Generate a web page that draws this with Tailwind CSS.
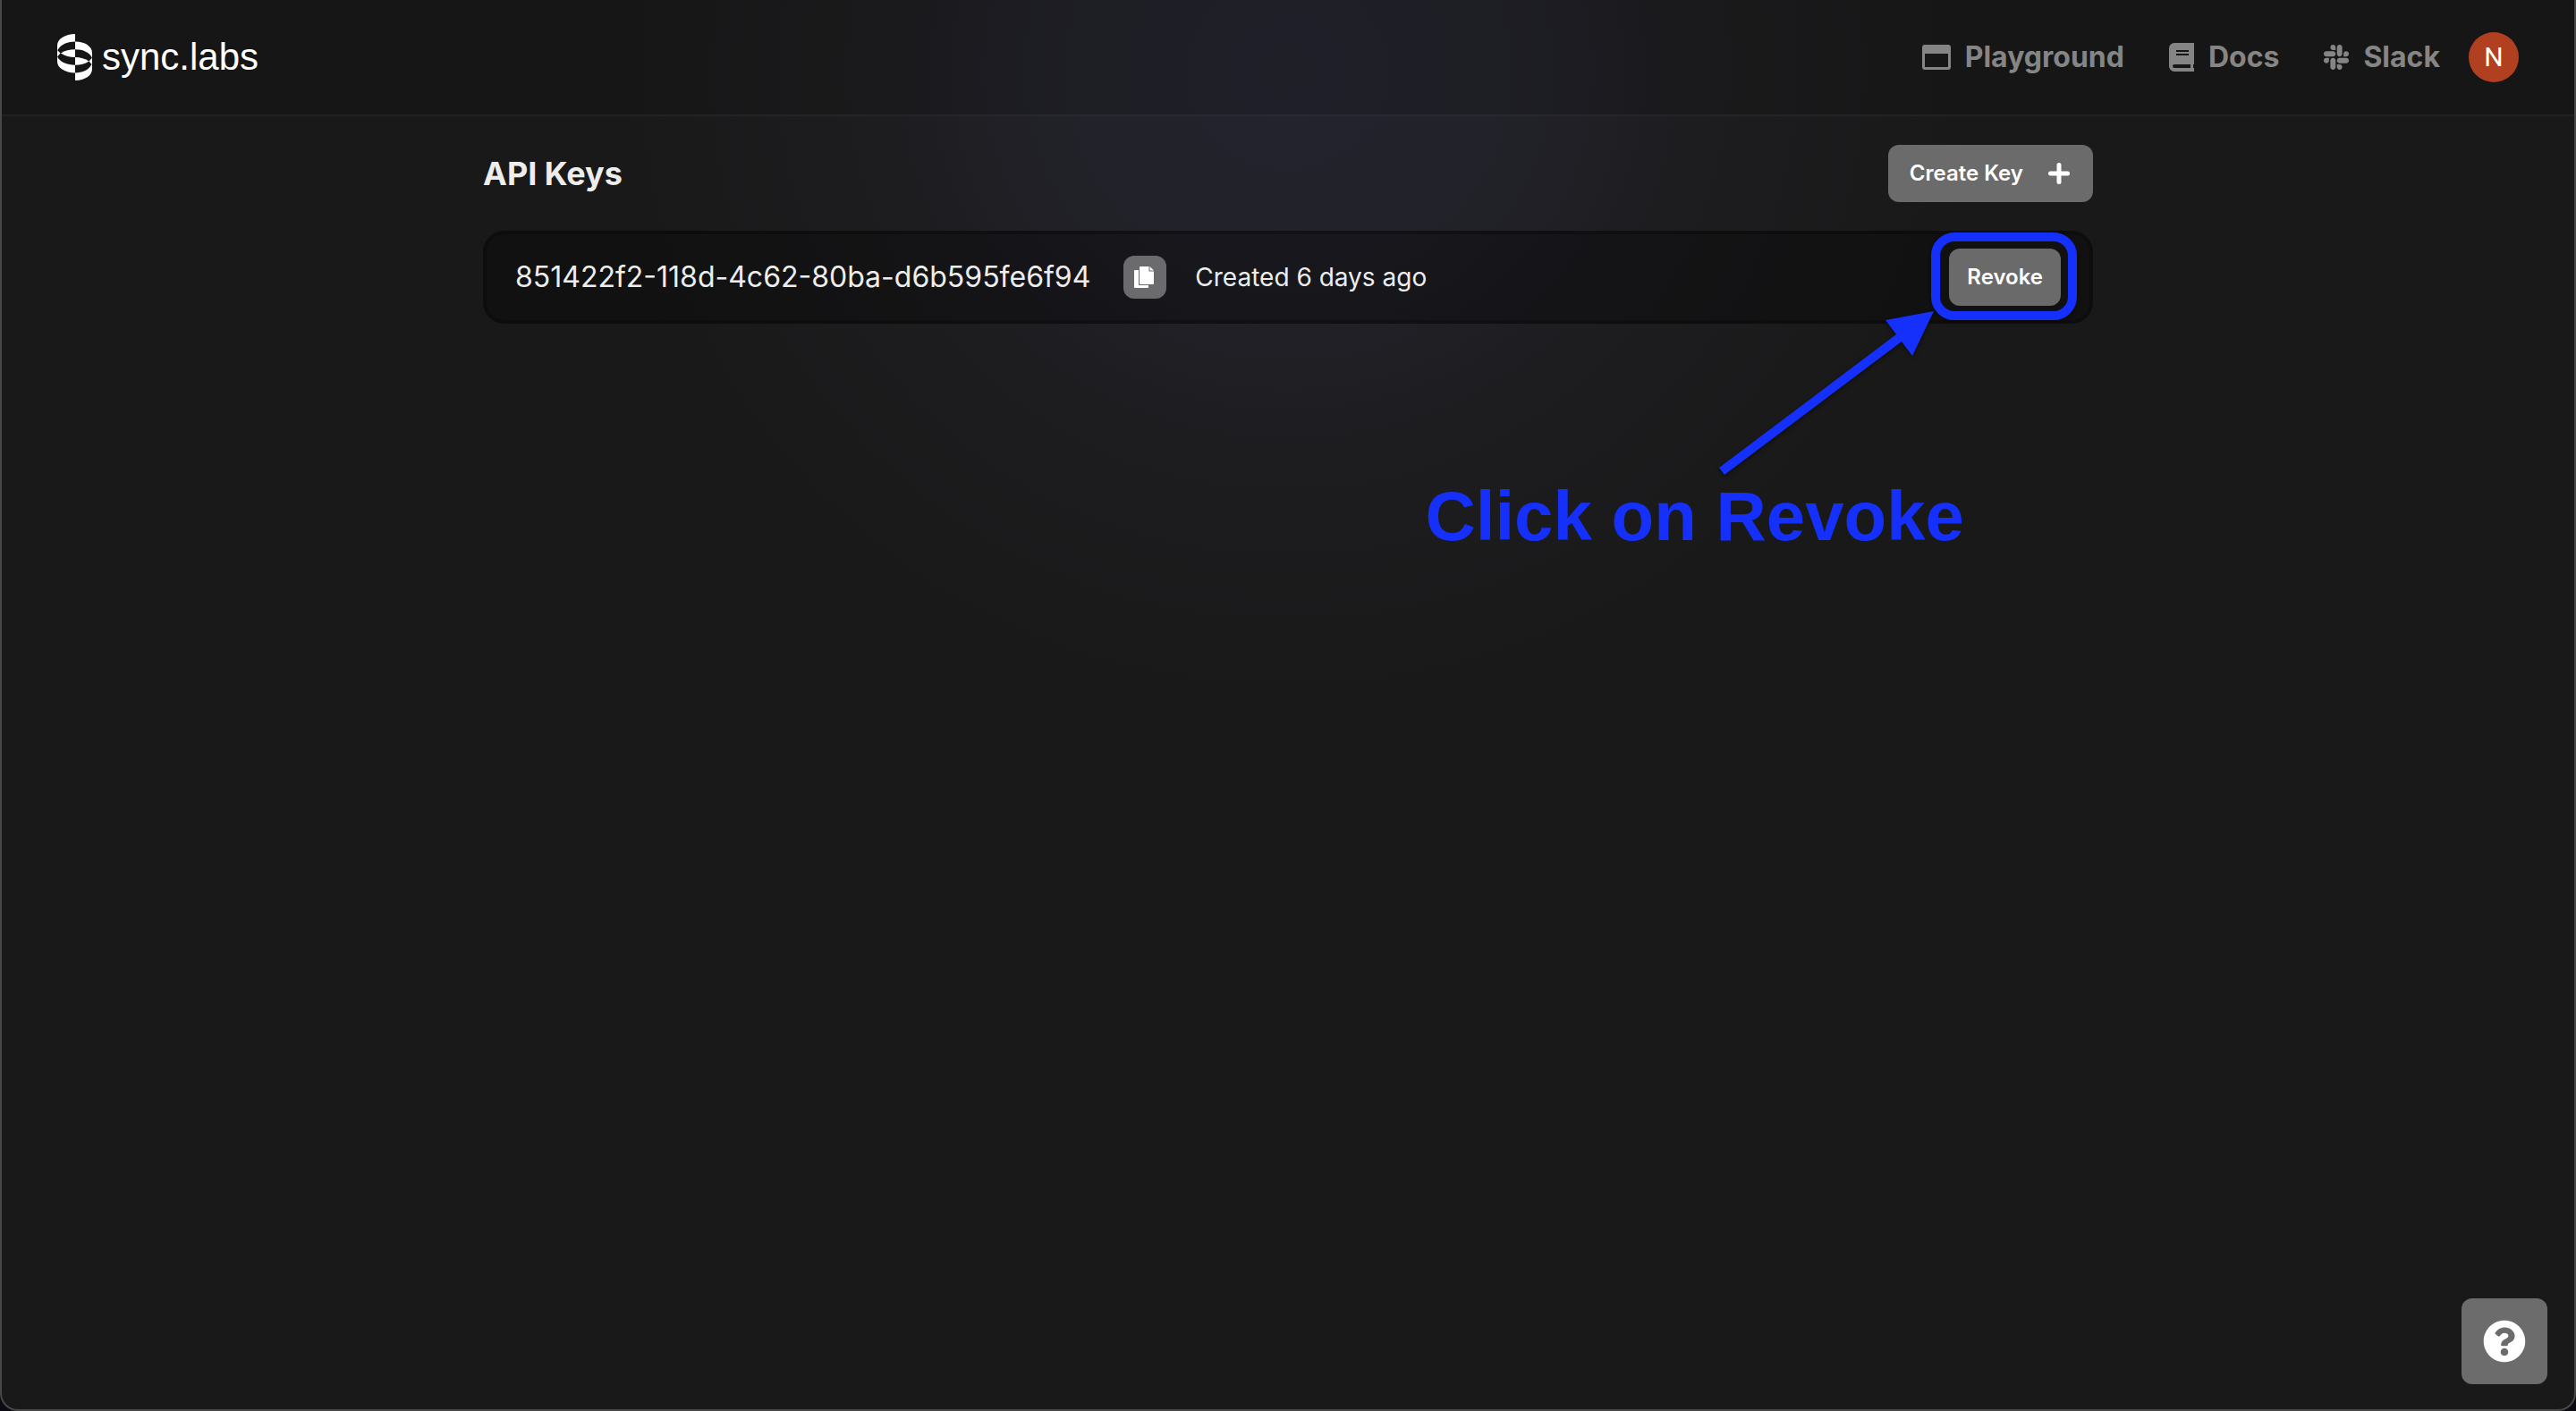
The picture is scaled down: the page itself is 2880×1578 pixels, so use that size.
<!DOCTYPE html>
<html lang="en">
<head>
<meta charset="utf-8">
<meta name="viewport" content="width=device-width, initial-scale=1">
<title>sync.labs – API Keys</title>
<script src="https://cdn.jsdelivr.net/npm/@tailwindcss/browser@4"></script>
</head>
<body class="bg-[#0c0a12] font-['Inter',sans-serif] text-[#ededed]">
<div class="relative flex min-h-screen flex-col overflow-hidden rounded-b-[20px] border-x-2 border-b-2 border-[#484848] bg-[#191919] bg-[radial-gradient(ellipse_760px_720px_at_50%_80px,#23232e_0%,#22222a_30%,#1d1d20_60%,#191919_100%)]">
  <header class="flex h-[130px] items-center justify-between border-b-2 border-white/5 bg-black/10 px-[62px]">
    <a href="#" class="flex items-center gap-2.5 text-white">
      <svg class="h-[52px] w-[40px]" viewBox="0 0 40 52" fill="currentColor" aria-hidden="true">
        <path d="M20 0v8.600C12 8.600 5 11.500 1.500 16.500L0 18.500V13C0 5.500 9 0 20 0Z"/>
        <path d="M20 8.600C31 8.600 39 14 39 21v5.700C36 20.500 29 17.300 20 17.300Z"/>
        <path d="M20 17.300V26C14 26 8.500 24.500 4 21.500 8.500 18.500 14 17.300 20 17.300Z"/>
        <path d="M0 18 3.500 21.500 0 25.500Z"/>
        <path d="M20 26c6 0 11 1.500 15.500 4.500-4.500 3-9.500 4.200-15.500 4.200Z"/>
        <path d="M39 26.500v8l-3.500-4Z"/>
        <path d="M0 25.300C3 31.500 11 34.700 20 34.700v8.700C9 43.400 0 38 0 31Z"/>
        <path d="M39 33.500V39c0 7.500-8 13-19 13v-8.600c8 0 14.500-2.900 17.500-7.900Z"/>
      </svg>
      <span class="font-['Liberation_Sans',sans-serif] text-[42px] leading-[52px]">sync.labs</span>
    </a>
    <nav class="flex items-center gap-[50px] text-[32px] leading-10 font-bold text-[#858585]">
      <a href="#" class="flex items-center gap-4">
        <svg class="h-7 w-8" viewBox="0 0 32 28" fill="currentColor" aria-hidden="true"><path fill-rule="evenodd" d="M3 0h26a3 3 0 0 1 3 3v22a3 3 0 0 1-3 3H3a3 3 0 0 1-3-3V3a3 3 0 0 1 3-3Zm0 10v14.500c0 .3.200.5.500.5h25c.3 0 .5-.2.500-.5V10Z"/></svg>
        Playground
      </a>
      <a href="#" class="flex items-center gap-4">
        <svg class="h-8 w-7" viewBox="0 0 28 32" fill="currentColor" aria-hidden="true"><path fill-rule="evenodd" d="M6 0h22v24h-1v4h1v4H6a6 6 0 0 1-6-6V6a6 6 0 0 1 6-6Zm2 8v2h14V8Zm0 4v2h14v-2ZM6 24a2 2 0 0 0 0 4h18v-4Z"/></svg>
        Docs
      </a>
      <div class="flex items-center gap-8">
        <a href="#" class="flex items-center gap-4">
          <svg class="h-8 w-7" viewBox="0 0 448 512" fill="currentColor" aria-hidden="true"><path d="M94.120 315.100c0 25.900-21.160 47.060-47.060 47.060S0 341 0 315.100c0-25.900 21.160-47.060 47.060-47.060h47.060v47.060zm23.720 0c0-25.900 21.160-47.060 47.060-47.060s47.060 21.160 47.060 47.060v117.840c0 25.900-21.160 47.060-47.060 47.060s-47.060-21.160-47.060-47.060V315.100zm47.060-188.980c-25.900 0-47.060-21.160-47.060-47.060S139 32 164.900 32s47.060 21.160 47.060 47.060v47.060H164.900zm0 23.720c25.900 0 47.060 21.160 47.060 47.060s-21.160 47.060-47.060 47.060H47.060C21.160 243.960 0 222.800 0 196.900s21.160-47.060 47.060-47.060H164.900zm188.980 47.060c0-25.900 21.160-47.060 47.060-47.060 25.900 0 47.060 21.160 47.060 47.060s-21.160 47.060-47.060 47.060h-47.060V196.900zm-23.720 0c0 25.900-21.160 47.060-47.060 47.060-25.900 0-47.060-21.160-47.060-47.060V79.060c0-25.900 21.160-47.060 47.060-47.060 25.900 0 47.060 21.160 47.060 47.060V196.900zM283.100 385.880c25.900 0 47.060 21.160 47.060 47.060 0 25.900-21.160 47.060-47.060 47.060-25.900 0-47.060-21.160-47.060-47.060v-47.060h47.060zm0-23.720c-25.900 0-47.060-21.160-47.060-47.060 0-25.900 21.160-47.060 47.060-47.060h117.840c25.900 0 47.060 21.160 47.060 47.060 0 25.900-21.160 47.060-47.060 47.060H283.100z"/></svg>
          Slack
        </a>
        <button type="button" aria-label="Account" class="flex size-14 items-center justify-center rounded-full bg-[#b04020] font-['Roboto',sans-serif] text-[30px] font-normal text-white">N</button>
      </div>
    </nav>
  </header>

  <main class="mx-auto flex w-full max-w-[1800px] flex-1 flex-col gap-8 pt-8">
    <div class="flex items-center justify-between">
      <h1 class="text-[36px] leading-10 font-bold">API Keys</h1>
      <button type="button" class="flex h-16 items-center gap-[26px] rounded-xl bg-[#6b6b6b] px-6 text-2xl font-semibold text-white">
        Create Key
        <svg class="size-7" viewBox="0 0 28 28" fill="none" stroke="currentColor" stroke-width="5" stroke-linecap="round" aria-hidden="true"><path d="M14 4.500v19M4.500 14h19"/></svg>
      </button>
    </div>

    <section class="flex h-[104px] items-center justify-between rounded-3xl border-4 border-black/25 bg-black/30 px-8">
      <div class="flex items-center gap-8">
        <span class="pr-[5px] text-[32px] leading-10">851422f2-118d-4c62-80ba-d6b595fe6f94</span>
        <button type="button" aria-label="Copy key" class="flex size-12 items-center justify-center rounded-xl bg-[#6b6b6d] text-white">
          <svg class="size-6" viewBox="0 0 24 24" fill="currentColor" aria-hidden="true"><path d="M7 0h9.500v5.500H22V19a1 1 0 0 1-1 1H7a1 1 0 0 1-1-1V1a1 1 0 0 1 1-1Z"/><path d="M17.500 0 22 4.500h-4.500Z"/><path d="M1 4h4v17h11v2a1 1 0 0 1-1 1H1a1 1 0 0 1-1-1V5a1 1 0 0 1 1-1Z"/></svg>
        </button>
        <span class="text-[28px] leading-10">Created 6 days ago</span>
      </div>
      <div class="relative">
        <button type="button" class="flex h-16 items-center rounded-xl bg-[#6a6a6a] px-5 text-2xl font-semibold text-white">Revoke</button>
        <div class="pointer-events-none absolute -top-[18px] -right-[18px] -bottom-4 -left-5 rounded-[26px] border-10 border-[#1430fa] shadow-[0_2px_4px_rgba(0,0,0,0.5)]"></div>
        <svg class="pointer-events-none absolute top-[68px] right-[140px] h-[188px] w-[244px] text-[#1430fa] drop-shadow-[0_2px_2px_rgba(0,0,0,0.5)]" viewBox="0 0 244 188" fill="currentColor" aria-hidden="true"><path d="M242 2 188 12 200 28 2 177 8 185 206 36 218 52Z"/></svg>
        <p class="pointer-events-none absolute top-[255px] right-[108px] font-['Liberation_Sans',sans-serif] text-[78px] leading-[88px] font-bold whitespace-nowrap text-[#1430fa]">Click on Revoke</p>
      </div>
    </section>
  </main>

  <button type="button" aria-label="Help" class="fixed right-8 bottom-[30px] flex size-24 items-center justify-center rounded-xl bg-[#6c6c6c] text-white">
    <svg class="size-12" viewBox="0 0 512 512" fill="currentColor" aria-hidden="true"><path d="M504 256c0 136.997-111.043 248-248 248S8 392.997 8 256C8 119.083 119.043 8 256 8s248 111.083 248 248zM262.655 90c-54.497 0-89.255 22.957-116.549 63.758-3.536 5.286-2.353 12.415 2.715 16.258l34.699 26.310c5.205 3.947 12.621 3.008 16.665-2.122 17.864-22.658 30.113-35.797 57.303-35.797 20.429 0 45.698 13.148 45.698 32.958 0 14.976-12.363 22.667-32.534 33.976C247.128 238.528 216 254.941 216 296v4c0 6.627 5.373 12 12 12h56c6.627 0 12-5.373 12-12v-1.333c0-28.462 83.186-29.647 83.186-106.667 0-58.002-60.165-102-116.531-102zM256 338c-25.365 0-46 20.635-46 46 0 25.364 20.635 46 46 46s46-20.636 46-46c0-25.364-20.635-46-46-46z"/></svg>
  </button>
</div>
</body>
</html>
